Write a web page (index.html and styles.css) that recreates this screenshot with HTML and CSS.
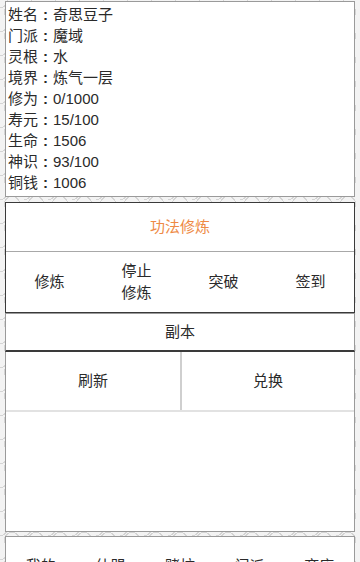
FILE: index.html
```html
<!DOCTYPE html>
<html lang="zh-CN">
<head>
<meta charset="utf-8">
<link rel="stylesheet" href="styles.css">
</head>
<body>
<div class="page">
  <div class="info">
    <div>姓名<span class="sep">:</span>奇思豆子</div>
    <div>门派<span class="sep">:</span>魔域</div>
    <div>灵根<span class="sep">:</span>水</div>
    <div>境界<span class="sep">:</span>炼气一层</div>
    <div>修为<span class="sep">:</span>0/1000</div>
    <div>寿元<span class="sep">:</span>15/100</div>
    <div>生命<span class="sep">:</span>1506</div>
    <div>神识<span class="sep">:</span>93/100</div>
    <div>铜钱<span class="sep">:</span>1006</div>
  </div>

  <div class="skill">
    <div class="skill-title">功法修炼</div>
    <div class="skill-actions">
      <div class="act">修炼</div>
      <div class="act">停止<br>修炼</div>
      <div class="act">突破</div>
      <div class="act">签到</div>
    </div>
  </div>

  <div class="dungeon">副本</div>

  <div class="shop">
    <div class="shop-row">
      <div class="shop-btn">刷新</div>
      <div class="shop-btn">兑换</div>
    </div>
    <div class="shop-body"></div>
  </div>

  <div class="nav">
    <div class="nav-item">我的</div>
    <div class="nav-item">仙盟</div>
    <div class="nav-item">赌坊</div>
    <div class="nav-item">门派</div>
    <div class="nav-item">商店</div>
  </div>
</div>
</body>
</html>
```

FILE: styles.css
```css
html, body {
  margin: 0;
  padding: 0;
}
body {
  width: 360px;
  height: 562px;
  overflow: hidden;
  font-family: "Liberation Sans", "Noto Sans CJK SC", sans-serif;
  font-size: 15px;
  color: #2a2a2a;
  background-color: #f3f3f3;
  background-image:
    radial-gradient(circle at 50% 50%, transparent 0 7px, #d4d4d4 7px 8px, transparent 8px),
    radial-gradient(circle at 0 0, transparent 0 7px, #d4d4d4 7px 8px, transparent 8px);
  background-size: 24px 24px;
}
.page {
  padding: 1px 5px 0 5px;
  display: flex;
  flex-direction: column;
}
.info {
  background: #fff;
  border: 1px solid #9a9a9a;
  padding: 2px 2px 3px 2px;
  line-height: 21px;
  height: 189px;
}
.sep {
  display: inline-block;
  width: 15px;
  text-align: center;
  font-weight: bold;
}
.skill {
  margin-top: 5px;
  background: #fff;
  border: 1px solid #3a3a3a;
}
.skill-title {
  height: 49px;
  padding-bottom: 3px;
  box-sizing: border-box;
  display: flex;
  align-items: center;
  justify-content: center;
  color: #ee8a45;
  border-bottom: 1px solid #a8a8a8;
}
.skill-actions {
  height: 60px;
  display: grid;
  grid-template-columns: repeat(4, 1fr);
}
.act {
  display: flex;
  align-items: center;
  justify-content: center;
  text-align: center;
  line-height: 22px;
  padding-bottom: 1px;
}
.dungeon {
  height: 39px;
  padding-bottom: 3px;
  box-sizing: border-box;
  background: #fff;
  border-left: 1px solid #9a9a9a;
  border-right: 1px solid #9a9a9a;
  border-top: 1px solid #9a9a9a;
  border-bottom: 2px solid #3a3a3a;
  display: flex;
  align-items: center;
  justify-content: center;
}
.shop {
  background: #fff;
  border: 1px solid #9a9a9a;
  border-top: none;
  height: 179px;
  display: flex;
  flex-direction: column;
}
.shop-row {
  height: 58px;
  display: grid;
  grid-template-columns: 1fr 1fr;
  border-bottom: 2px solid #e2e2e2;
}
.shop-btn {
  display: flex;
  align-items: center;
  justify-content: center;
  padding-bottom: 3px;
}
.shop-btn + .shop-btn {
  border-left: 2px solid #cfcfcf;
}
.shop-body {
  flex: 1;
}
.nav {
  margin-top: 4px;
  background: #fff;
  border: 1px solid #9a9a9a;
  height: 40px;
  display: grid;
  grid-template-columns: repeat(5, 1fr);
  padding-top: 18px;
}
.nav-item {
  text-align: center;
  line-height: 22px;
}
```
